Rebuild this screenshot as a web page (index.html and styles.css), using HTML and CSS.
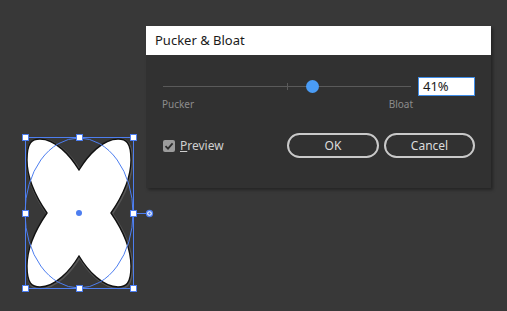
FILE: index.html
```html
<!DOCTYPE html>
<html>
<head>
<meta charset="utf-8">
<link rel="stylesheet" href="styles.css">
</head>
<body>
<div class="canvas">
  <svg class="art" width="507" height="311" viewBox="0 0 507 311">
    <path class="shape-shadow" d="M79,170 C88,155 103,139 118,139 C126,139 131,142 131,160 C131,180 120,200 111,213 C120,226 131,246 131,266 C131,284 126,287 118,287 C103,287 88,271 79,256 C70,271 55,287 40,287 C32,287 27,284 27,266 C27,246 38,226 47,213 C38,200 27,180 27,160 C27,142 32,139 40,139 C55,139 70,155 79,170 Z"/>
    <path class="shape" d="M79,170 C88,155 103,139 118,139 C126,139 131,142 131,160 C131,180 120,200 111,213 C120,226 131,246 131,266 C131,284 126,287 118,287 C103,287 88,271 79,256 C70,271 55,287 40,287 C32,287 27,284 27,266 C27,246 38,226 47,213 C38,200 27,180 27,160 C27,142 32,139 40,139 C55,139 70,155 79,170 Z"/>
    <ellipse class="sel" cx="79" cy="213" rx="54" ry="75"/>
    <rect class="sel" x="25.5" y="137.5" width="108" height="151"/>
    <line class="sel" x1="133" y1="213.5" x2="146" y2="213.5"/>
    <circle class="rot" cx="149.5" cy="213.5" r="3"/>
    <circle class="rot-in" cx="149.5" cy="213.5" r="1.2"/>
    <circle class="center" cx="79" cy="213" r="3"/>
    <rect class="h" x="22.5" y="134.5" width="6" height="6"/>
    <rect class="h" x="76.5" y="134.5" width="6" height="6"/>
    <rect class="h" x="130.5" y="134.5" width="6" height="6"/>
    <rect class="h" x="22.5" y="210.5" width="6" height="6"/>
    <rect class="h" x="130.5" y="210.5" width="6" height="6"/>
    <rect class="h" x="22.5" y="285.5" width="6" height="6"/>
    <rect class="h" x="76.5" y="285.5" width="6" height="6"/>
    <rect class="h" x="130.5" y="285.5" width="6" height="6"/>
  </svg>
</div>
<div class="dialog">
  <div class="title">Pucker &amp; Bloat</div>
  <div class="body">
    <div class="slider-row">
      <div class="slider">
        <div class="track"></div>
        <div class="tick"></div>
        <div class="thumb"></div>
      </div>
      <div class="value">41%</div>
    </div>
    <div class="labels">
      <span>Pucker</span>
      <span>Bloat</span>
    </div>
    <div class="actions">
      <label class="check">
        <span class="box">
          <svg width="12" height="12" viewBox="0 0 12 12"><path d="M2.5 6.2 L5 8.6 L9.6 3.4" fill="none" stroke="#2e2e2e" stroke-width="1.8"/></svg>
        </span>
        <span class="check-label"><u>P</u>review</span>
      </label>
      <div class="buttons">
        <div class="btn ok">OK</div>
        <div class="btn cancel">Cancel</div>
      </div>
    </div>
  </div>
</div>
</body>
</html>
```

FILE: styles.css
```css
html, body {
  margin: 0;
  padding: 0;
  width: 507px;
  height: 311px;
  background: #383838;
  overflow: hidden;
  font-family: "Noto Sans", "Liberation Sans", sans-serif;
}
.canvas {
  position: relative;
  width: 507px;
  height: 311px;
}
.art {
  position: absolute;
  left: 0;
  top: 0;
}
.shape-shadow {
  fill: none;
  stroke: #555;
  stroke-width: 3;
  transform: translate(0.6px, 0.8px);
}
.shape {
  fill: #ffffff;
  stroke: #111;
  stroke-width: 1.4;
}
.sel {
  fill: none;
  stroke: #4d7ef0;
  stroke-width: 1;
}
.rot {
  fill: #ffffff;
  stroke: #4d7ef0;
  stroke-width: 1.3;
}
.rot-in {
  fill: #4d7ef0;
}
.center {
  fill: #4d7ef0;
}
.h {
  fill: #ffffff;
  stroke: #4d7ef0;
  stroke-width: 1;
}
.dialog {
  position: absolute;
  left: 146px;
  top: 26px;
  width: 345px;
  height: 162px;
  display: flex;
  flex-direction: column;
  box-shadow: 2px 2px 3px rgba(0,0,0,0.35);
}
.title {
  height: 29px;
  line-height: 29px;
  background: #ffffff;
  color: #1a1a1a;
  font-size: 13px;
  padding-left: 9px;
}
.body {
  flex: 1;
  background: #313131;
  padding: 22px 16px 0 17px;
  display: flex;
  flex-direction: column;
}
.slider-row {
  display: flex;
  align-items: center;
  height: 19px;
  gap: 7px;
}
.slider {
  position: relative;
  width: 248px;
  height: 19px;
}
.track {
  position: absolute;
  left: 0;
  right: 0;
  top: 9px;
  height: 1px;
  background: #5a5a5a;
}
.tick {
  position: absolute;
  left: 124px;
  top: 6px;
  width: 1px;
  height: 7px;
  background: #5a5a5a;
}
.thumb {
  position: absolute;
  left: 143px;
  top: 3px;
  width: 13px;
  height: 13px;
  border-radius: 50%;
  background: #4a9cf5;
}
.value {
  box-sizing: border-box;
  width: 57px;
  height: 19px;
  background: #ffffff;
  border: 1px solid #3f8de8;
  color: #1a1a1a;
  font-size: 13px;
  line-height: 17px;
  padding-left: 4px;
}
.labels {
  display: flex;
  justify-content: space-between;
  width: 251px;
  margin-left: -1px;
  margin-top: 2px;
  font-size: 10px;
  line-height: 12px;
  color: #8c8c8c;
}
.actions {
  margin-top: 23px;
  display: flex;
  align-items: center;
  justify-content: space-between;
  height: 25px;
}
.check {
  display: flex;
  align-items: center;
  gap: 5px;
}
.box {
  width: 12px;
  height: 12px;
  border-radius: 2px;
  background: #9c9c9c;
  display: flex;
}
.check-label {
  color: #cfcfcf;
  font-size: 12px;
}
.check-label u {
  text-decoration-thickness: 1px;
}
.buttons {
  display: flex;
  gap: 5px;
}
.btn {
  box-sizing: border-box;
  height: 25px;
  border: 2px solid #c9c9c9;
  border-radius: 13px;
  color: #dcdcdc;
  font-size: 12px;
  line-height: 21px;
  text-align: center;
}
.ok {
  width: 92px;
}
.cancel {
  width: 91px;
}
```
